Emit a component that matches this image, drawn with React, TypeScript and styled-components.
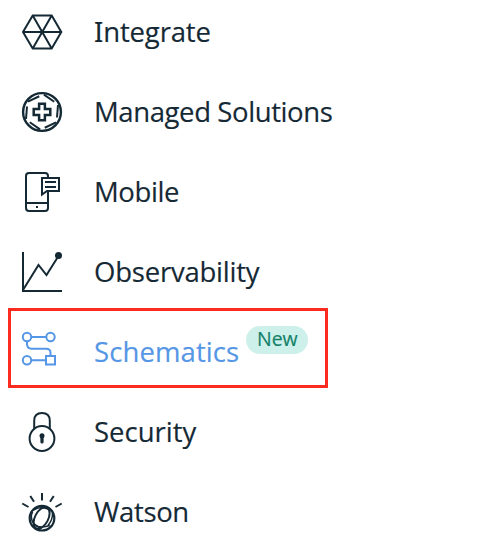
import React, { ReactNode } from 'react';
import styled, { createGlobalStyle } from 'styled-components';

const GlobalStyle = createGlobalStyle`
  body { margin: 0; background: #fff; overflow: hidden; }
`;

const Menu = styled.nav`
  display: flex;
  flex-direction: column;
  height: 550px;
  overflow: hidden;
  font-family: 'Open Sans', 'Noto Sans', sans-serif;
`;

const Row = styled.a<{ $active?: boolean; $first?: boolean }>`
  position: relative;
  display: flex;
  flex: none;
  align-items: center;
  height: 80px;
  margin-top: ${p => (p.$first ? '-8px' : '0')};
  padding-left: 22px;
  color: ${p => (p.$active ? '#5596e6' : '#152935')};
`;

const Icon = styled.svg`
  flex: none;
  width: 40px;
  height: 40px;
  margin-right: 32px;
  overflow: visible;
  fill: none;
  stroke: currentColor;
  stroke-width: 2;
`;

const Label = styled.span<{ $spacing: number; $slab?: boolean }>`
  display: inline-block;
  font-size: 27.5px;
  line-height: 40px;
  white-space: nowrap;
  letter-spacing: ${p => p.$spacing}px;
  -webkit-text-stroke: 0.15px currentColor;
  &::first-letter {
    ${p => (p.$slab ? "font-family: 'Noto Sans', sans-serif;" : '')}
  }
`;

const Badge = styled.span`
  display: flex;
  align-items: center;
  justify-content: center;
  box-sizing: border-box;
  width: 62px;
  height: 28px;
  margin: -24px 0 0 7px;
  border-radius: 14px;
  background: #cef0eb;
  color: #128068;
  font-size: 19.5px;
  line-height: 26px;
  padding-bottom: 2px;
  -webkit-text-stroke: 0.15px currentColor;
`;

const Highlight = styled.span`
  position: absolute;
  top: -4.5px;
  left: 7.5px;
  box-sizing: border-box;
  width: 320.5px;
  height: 80.5px;
  border: 3px solid #fb2b20;
`;

interface Item {
  label: string;
  spacing: number;
  icon: ReactNode;
  slab?: boolean;
  active?: boolean;
  badge?: string;
}

const items: Item[] = [
  {
    label: 'Integrate',
    spacing: -0.15,
    slab: true,
    icon: <path d="M1 20 10.7 3.5H29.7L39.3 20 29.7 36.5H10.7ZM1 20H39.3M10.7 3.5 29.7 36.5M29.7 3.5 10.7 36.5" />,
  },
  {
    label: 'Managed Solutions',
    spacing: -0.4,
    icon: (
      <>
        <circle cx="20" cy="20" r="18.9" strokeWidth="2.4" />
        <path d="M17.1 11.7H22.9V17.1H28.3V22.9H22.9V28.3H17.1V22.9H11.7V17.1H17.1Z" strokeWidth="2.5" />
        {[0, 60, 120, 180, 240, 300].map(a => (
          <path key={a} d="M5 14.5L4 27" transform={`rotate(${a} 20 20)`} />
        ))}
      </>
    ),
  },
  {
    label: 'Mobile',
    spacing: -0.4,
    icon: (
      <>
        <path d="M26 5V4Q26 1 23 1H7Q4 1 4 4V36Q4 39 7 39H23Q26 39 26 36V20M4 31H26" />
        <path d="M20 6H37V19H25L20 22.5ZM23 10H34M23 15H34" />
        <path d="M14 35H16" />
      </>
    ),
  },
  {
    label: 'Observability',
    spacing: -0.22,
    icon: (
      <>
        <path d="M1 0V39H40M1 38 16.5 13 24.5 23 36.5 4" />
        <circle cx="36.5" cy="3.5" r="3.5" fill="currentColor" stroke="none" />
      </>
    ),
  },
  {
    label: 'Schematics',
    spacing: 0.1,
    active: true,
    badge: 'New',
    icon: (
      <>
        <circle cx="5" cy="5" r="4.2" />
        <circle cx="28.5" cy="5" r="4.2" />
        <circle cx="5" cy="28.3" r="4.2" />
        <path d="M9.2 5H24.3M9.2 28.3H24M24 24H33V32.6H24ZM5 9.2V12Q5 16.7 9.5 16.7H24Q28.5 16.7 28.5 21V24" />
      </>
    ),
  },
  {
    label: 'Security',
    spacing: 0,
    icon: (
      <>
        <circle cx="20" cy="26.5" r="12.4" />
        <path d="M12.2 16.8V8.7Q12.2 1 20 1T27.8 8.7V16.8" />
        <circle cx="20" cy="23.7" r="2.5" fill="currentColor" stroke="none" />
        <path d="M20 23.5V30" strokeWidth="3.2" strokeLinecap="round" />
      </>
    ),
  },
  {
    label: 'Watson',
    spacing: -0.35,
    icon: (
      <>
        <path d="M20 1V8.5M8.3 4 12 9.7M31.7 4 28 9.7M.3 11.5 6.5 15M39.7 11.5 33.5 15" />
        <circle cx="20" cy="26.2" r="12.3" strokeWidth="2.2" />
        <ellipse cx="19.6" cy="26" rx="6.6" ry="11.7" transform="rotate(28 19.6 26)" strokeWidth="2" />
        <path d="M11.5 18Q20 13 29.8 19.2M10.6 20Q7.5 26 12 32Q18 37 27.8 33.5M30 18.5Q32 26 26 33.5M10 29Q14 35.5 20 36" strokeWidth="1.5" />
      </>
    ),
  },
];

export default function App() {
  return (
    <>
      <GlobalStyle />
      <Menu>
        {items.map((item, i) => (
          <Row key={item.label} $first={i === 0} $active={item.active}>
            <Icon viewBox="0 0 40 40">{item.icon}</Icon>
            <Label $spacing={item.spacing} $slab={item.slab}>{item.label}</Label>
            {item.badge && <Badge>{item.badge}</Badge>}
            {item.active && <Highlight />}
          </Row>
        ))}
      </Menu>
    </>
  );
}
